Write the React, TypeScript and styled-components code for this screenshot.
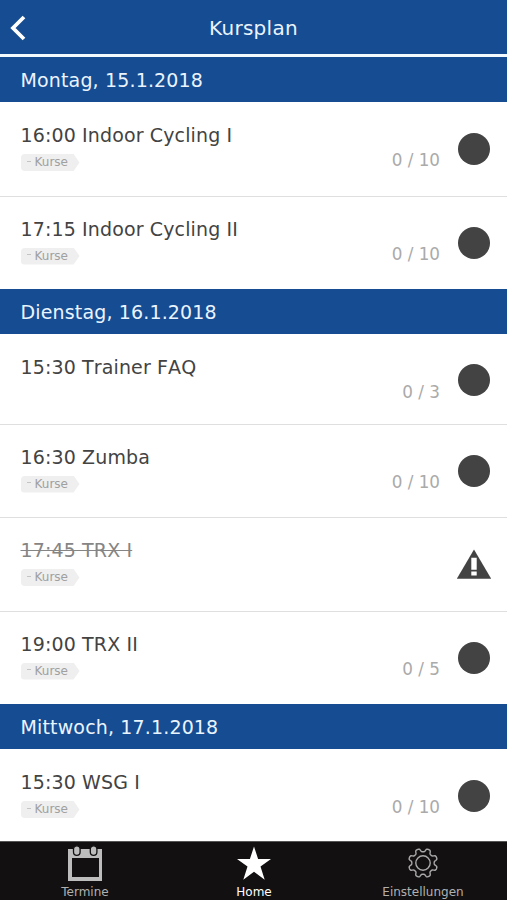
import React from "react";
import styled, { createGlobalStyle } from "styled-components";

const GlobalStyle = createGlobalStyle`
  * { box-sizing: border-box; }
  body { margin: 0; background: #fff; }
`;

const Screen = styled.div`
  display: flex;
  flex-direction: column;
  width: 507px;
  height: 900px;
  overflow: hidden;
  background: #fff;
  color: #434343;
  font-family: "DejaVu Sans", sans-serif;
`;

const Header = styled.header`
  display: grid;
  grid-template-columns: 60px 1fr 60px;
  align-items: center;
  flex: none;
  height: 57px;
  border-bottom: 3px solid #f4fbff;
  background: #164c91;
`;

const BackButton = styled.button`
  display: flex;
  align-items: center;
  height: 54px;
  padding: 2px 0 0 10px;
  border: 0;
  background: none;
`;

const Title = styled.h1`
  margin: 0;
  padding-top: 1px;
  color: #eaf4ff;
  font-size: 20px;
  font-weight: 400;
  letter-spacing: 0.3px;
  line-height: 26px;
  text-align: center;
`;

const Schedule = styled.main`
  flex: 1;
  min-height: 0;
  overflow: hidden;
`;

const DayHeading = styled.h2`
  height: 45px;
  margin: 0;
  padding-left: 20.5px;
  background: #164c91;
  color: #eaf4ff;
  font-size: 19px;
  font-weight: 400;
  letter-spacing: 0.15px;
  line-height: 46px;
`;

const CourseRow = styled.article<{ $compact?: boolean; $first?: boolean }>`
  display: flex;
  height: ${(p) => (p.$compact ? 89.5 : 93.5)}px;
  padding: 0 15px 0 20.5px;
  border-top: 1px solid ${(p) => (p.$first ? "transparent" : "#dfdfdf")};
`;

const CourseInfo = styled.div`
  flex: 1;
  padding-top: 20px;
`;

const CourseName = styled.div<{ $cancelled?: boolean }>`
  color: ${(p) => (p.$cancelled ? "#858585" : "#434343")};
  font-size: 19px;
  font-kerning: none;
  letter-spacing: 0.13px;
  line-height: 24px;
  text-decoration: ${(p) => (p.$cancelled ? "line-through" : "none")};
`;

const Tag = styled.span`
  display: flex;
  align-items: center;
  width: 59px;
  height: 17px;
  margin-top: 7px;
  padding-left: 6px;
  border-radius: 4px 0 0 4px;
  background: #efefef;
  clip-path: polygon(0 0, 90% 0, 100% 50%, 90% 100%, 0 100%);
  color: #a0a0a0;
  font-size: 12px;
  line-height: 17px;
`;

const TagMark = styled.i`
  width: 4px;
  height: 1px;
  margin: 0 4px 3px 0;
  background: #c4c4c4;
`;

const Places = styled.div`
  margin-right: 16px;
  padding-top: 46px;
  color: #aaa;
  font-size: 16.8px;
  line-height: 22px;
`;

const Status = styled.div<{ $compact?: boolean }>`
  display: flex;
  justify-content: center;
  width: 36px;
  padding-top: ${(p) => (p.$compact ? 28.5 : 30.4)}px;

  svg { flex: none; }
`;

const Dot = styled.span`
  width: 32px;
  height: 32px;
  border-radius: 50%;
  background: #434343;
`;

const TabBar = styled.nav`
  display: grid;
  grid-template-columns: repeat(3, 1fr);
  flex: none;
  height: 59px;
  border-top: 1px solid #555;
  background: #121010;
`;

const Tab = styled.a<{ $active?: boolean }>`
  display: flex;
  flex-direction: column;
  align-items: center;
  padding: 3px 0 0 1px;
  color: ${(p) => (p.$active ? "#fff" : "#b0b0b0")};
  font-size: 12px;
  line-height: 16px;

  svg { display: block; margin: 0 1px 3px 0; }
`;

const BackIcon = () => (
  <svg width="17" height="26" viewBox="0 0 17 26">
    <path d="M14 2 3 13l11 11" fill="none" stroke="#fff" strokeWidth="3.8" />
  </svg>
);

const WarningIcon = () => (
  <svg width="36" height="32" viewBox="0 0 36 32">
    <path d="M18 1.5 35.2 30.8H.8Z" fill="#434343" />
    <path d="M15.3 9.8h5.4v12h-5.4zM15.3 23.6h5.4v3.8h-5.4z" fill="#fff" />
  </svg>
);

const CalendarIcon = () => (
  <svg width="36" height="36" viewBox="0 0 36 36">
    <path d="M1 4h34v32H1zM5 13v19h27V13z" fill="#bdbdbd" fillRule="evenodd" />
    <g fill="#bdbdbd" stroke="#121010" strokeWidth="1.3">
      <rect x="6.5" y=".8" width="6.6" height="9.5" rx="3.3" />
      <rect x="23.3" y=".8" width="6.6" height="9.5" rx="3.3" />
    </g>
  </svg>
);

const StarIcon = () => (
  <svg width="36" height="36" viewBox="0 0 36 36">
    <path d="m18 1.5 4.1 12.6H35L24.5 21.6l4.2 13.1L18 26.7 7.3 34.7l4.2-13.1L1 14.1h12.9Z" fill="#fff" />
  </svg>
);

const gearPath = (() => {
  const points: string[] = [];
  for (let i = 0; i <= 160; i++) {
    const a = (i / 160) * Math.PI * 2;
    const wave = Math.cos(a * 8);
    const r = 12.9 + 1.75 * Math.tanh(wave * 2.1);
    points.push(`${(18 + r * Math.sin(a)).toFixed(2)} ${(18 - r * Math.cos(a)).toFixed(2)}`);
  }
  return `M${points.join("L")}Z`;
})();

const GearIcon = () => (
  <svg width="36" height="36" viewBox="0 0 36 36">
    <g fill="none" stroke="#aaa" strokeWidth="1.4" strokeLinejoin="round">
      <path d={gearPath} transform="rotate(22.5 18 18)" />
      <circle cx="18" cy="18" r="7.2" />
    </g>
  </svg>
);

type Course = {
  name: string;
  places?: string;
  untagged?: boolean;
  cancelled?: boolean;
};

const days: { date: string; courses: Course[] }[] = [
  {
    date: "Montag, 15.1.2018",
    courses: [
      { name: "16:00 Indoor Cycling I", places: "0 / 10" },
      { name: "17:15 Indoor Cycling II", places: "0 / 10" },
    ],
  },
  {
    date: "Dienstag, 16.1.2018",
    courses: [
      { name: "15:30 Trainer FAQ", places: "0 / 3", untagged: true },
      { name: "16:30 Zumba", places: "0 / 10" },
      { name: "17:45 TRX I", cancelled: true },
      { name: "19:00 TRX II", places: "0 / 5" },
    ],
  },
  {
    date: "Mittwoch, 17.1.2018",
    courses: [{ name: "15:30 WSG I", places: "0 / 10" }],
  },
];

export default function App() {
  return (
    <Screen>
      <GlobalStyle />
      <Header>
        <BackButton aria-label="Zurück"><BackIcon /></BackButton>
        <Title>Kursplan</Title>
      </Header>
      <Schedule>
        {days.map((day) => (
          <section key={day.date}>
            <DayHeading>{day.date}</DayHeading>
            {day.courses.map((course, i) => (
              <CourseRow key={course.name} $compact={course.untagged} $first={i === 0}>
                <CourseInfo>
                  <CourseName $cancelled={course.cancelled}>
                    {course.cancelled ? <span>{course.name}</span> : course.name}
                  </CourseName>
                  {!course.untagged && <Tag><TagMark />Kurse</Tag>}
                </CourseInfo>
                {course.places && <Places>{course.places}</Places>}
                <Status $compact={course.untagged}>
                  {course.cancelled ? <WarningIcon /> : <Dot />}
                </Status>
              </CourseRow>
            ))}
          </section>
        ))}
      </Schedule>
      <TabBar>
        <Tab><CalendarIcon />Termine</Tab>
        <Tab $active><StarIcon />Home</Tab>
        <Tab><GearIcon />Einstellungen</Tab>
      </TabBar>
    </Screen>
  );
}
